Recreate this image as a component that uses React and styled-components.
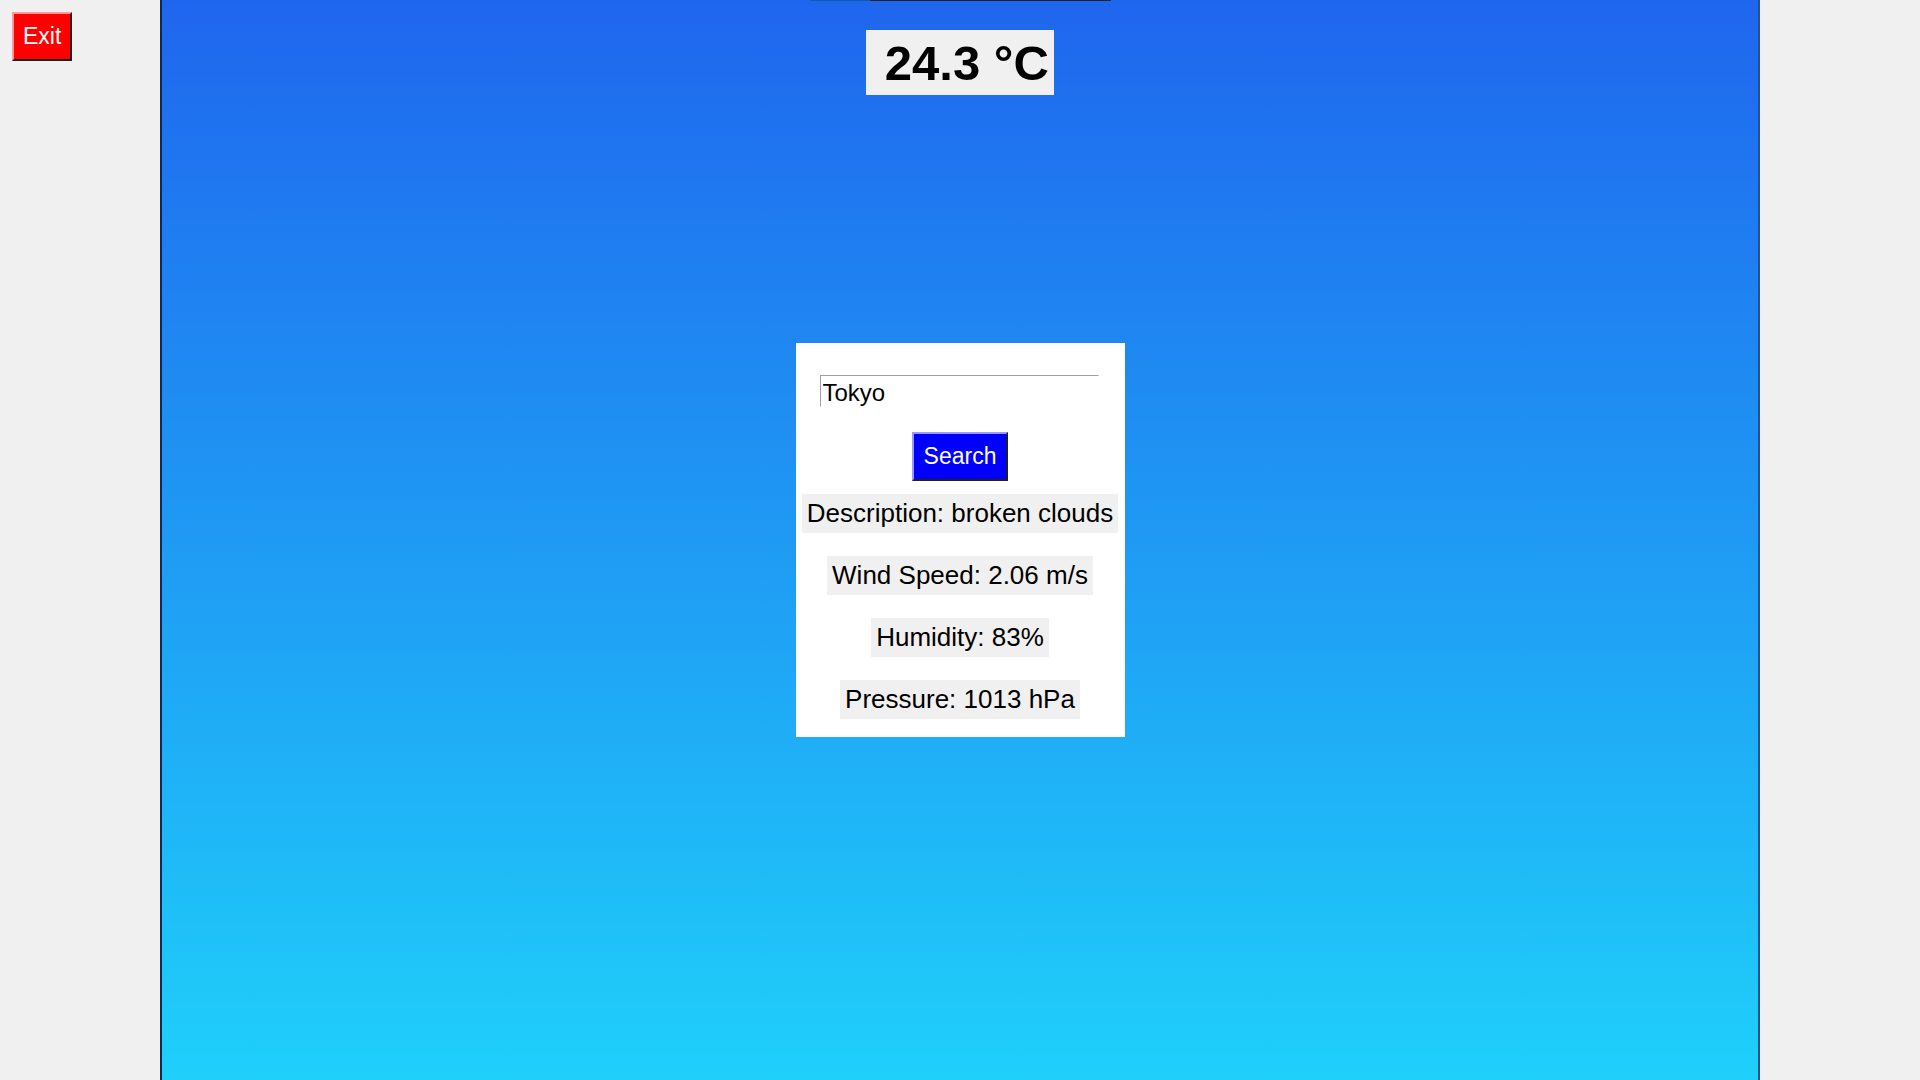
import React from 'react';
import styled, { createGlobalStyle } from 'styled-components';

// Global Styles
const GlobalStyle = createGlobalStyle`
  html, body {
    margin: 0;
    padding: 0;
    height: 100%;
    background: #f0f0f0;
    font-family: 'Liberation Sans', Arial, sans-serif;
  }
  #root {
    height: 100%;
  }
`;

// Styles
const Screen = styled.div`
  display: grid;
  grid-template-columns: 160px 1600px 1fr;
  height: 1080px;
  overflow: hidden;
`;

const Side = styled.div`
  padding: 12px;
`;

const ExitButton = styled.button`
  font-family: inherit;
  font-size: 23px;
  color: #ffffff;
  background: #ff0000;
  padding: 9px 9px;
  border: 2px solid;
  border-color: #ff9a9a #202020 #202020 #ff9a9a;
  cursor: pointer;
`;

const Panel = styled.main`
  display: grid;
  grid-template-rows: 1fr auto 1fr;
  justify-items: center;
  background: linear-gradient(180deg, #1f66ee 0%, #1f9af4 50%, #1fd0fa 100%);
  border-left: 2px solid #0b2a55;
  border-right: 2px solid #2a4f8a;
  box-sizing: border-box;
`;

const Header = styled.div`
  display: flex;
  flex-direction: column;
  align-items: center;
  align-self: start;
`;

const TopRule = styled.div`
  width: 301px;
  height: 1px;
  background: linear-gradient(90deg, #0f5fa0 0 60px, #222222 60px 100%);
`;

const Temperature = styled.div`
  margin-top: 29px;
  padding: 5px 5px 4px;
  background: #f0f0f0;
  color: #000000;
  font-size: 49px;
  font-weight: bold;
  white-space: pre;
`;

const Card = styled.section`
  display: flex;
  flex-direction: column;
  align-items: center;
  width: 329px;
  box-sizing: border-box;
  padding: 32px 0 18px;
  background: #ffffff;
`;

const CityInput = styled.input`
  width: 279px;
  box-sizing: border-box;
  height: 32px;
  margin-left: -2px;
  padding: 3px 2px 0;
  font-family: inherit;
  font-size: 24px;
  color: #000000;
  border: 1px solid;
  border-color: #a0a0a0 #ffffff #ffffff #a0a0a0;
  outline: none;
  background: #ffffff;
`;

const SearchButton = styled.button`
  margin: 25px 0 13px;
  font-family: inherit;
  font-size: 23px;
  color: #ffffff;
  background: #0000ff;
  padding: 9px 10px;
  border: 2px solid;
  border-color: #9a9aff #202020 #202020 #9a9aff;
  cursor: pointer;
`;

const Details = styled.div`
  display: flex;
  flex-direction: column;
  align-items: center;
  gap: 23px;
`;

const Detail = styled.p`
  margin: 0;
  padding: 4px 5px;
  background: #f0f0f0;
  color: #000000;
  font-size: 26px;
`;

function App() {
  const weather = {
    city: 'Tokyo',
    temp: 24.3,
    description: 'broken clouds',
    wind: 2.06,
    humidity: 83,
    pressure: 1013,
  };

  return (
    <>
      <GlobalStyle />
      <Screen>
        {/* Left column with exit */}
        <Side>
          <ExitButton>Exit</ExitButton>
        </Side>
        {/* Weather panel */}
        <Panel>
          <Header>
            <TopRule />
            <Temperature>{` ${weather.temp} °C`}</Temperature>
          </Header>
          <Card>
            <CityInput defaultValue={weather.city} />
            <SearchButton>Search</SearchButton>
            <Details>
              <Detail>Description: {weather.description}</Detail>
              <Detail>Wind Speed: {weather.wind} m/s</Detail>
              <Detail>Humidity: {weather.humidity}%</Detail>
              <Detail>Pressure: {weather.pressure} hPa</Detail>
            </Details>
          </Card>
          <div />
        </Panel>
        <div />
      </Screen>
    </>
  );
}

export default App;
